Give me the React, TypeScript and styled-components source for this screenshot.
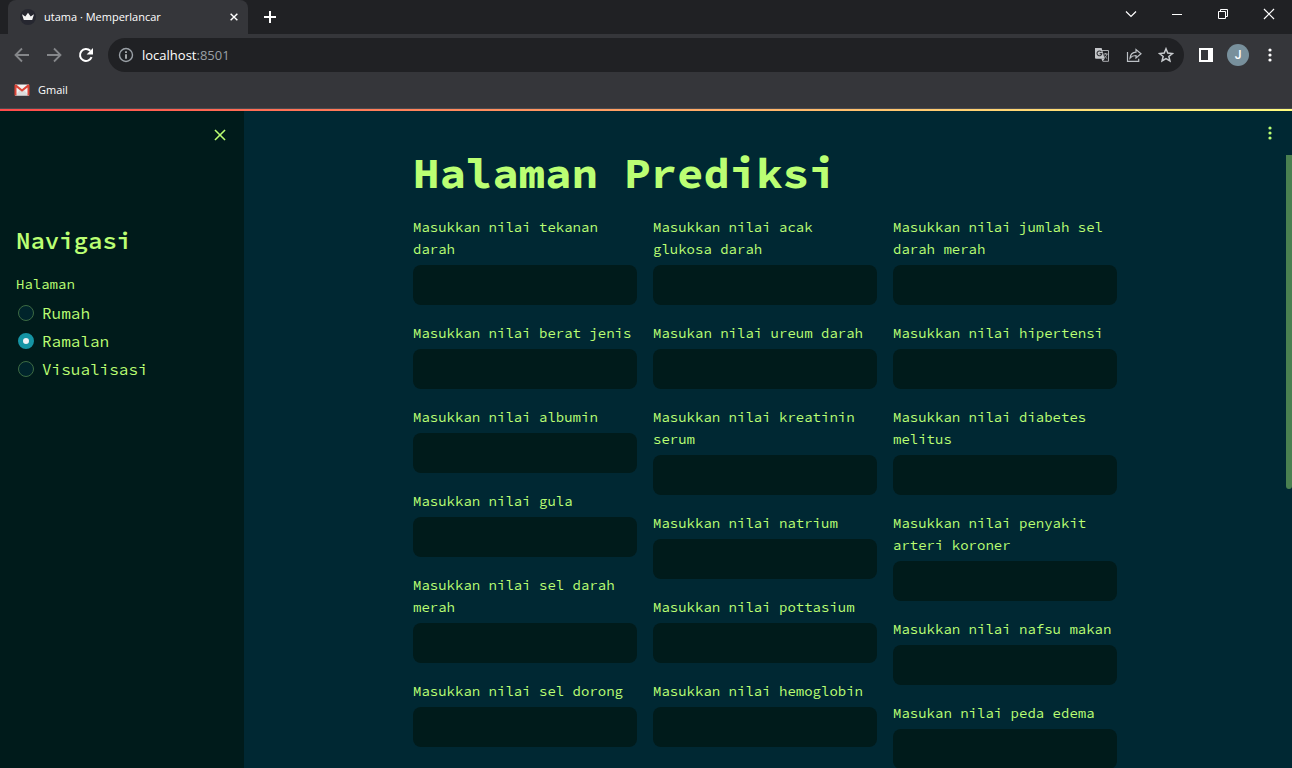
import React, { useState } from 'react';
import styled, { createGlobalStyle } from 'styled-components';

const mono = '"Source Code Pro", "DejaVu Sans Mono", monospace';
const ui = '"Open Sans", "Noto Sans", sans-serif';

const GlobalStyle = createGlobalStyle`
  *, *::before, *::after { box-sizing: border-box; }
  body { margin: 0; background: #002833; }
  h1, h2, p { margin: 0; }
  button, input { font: inherit; color: inherit; }
`;

const Window = styled.div`
  display: flex;
  flex-direction: column;
  height: 100vh;
  overflow: hidden;
  font-family: ${ui};
`;

const TabStrip = styled.div`
  display: flex;
  align-items: stretch;
  height: 34px;
  flex: none;
  padding-left: 8px;
  background: #202124;
  color: #fff;
`;

const Tab = styled.div`
  display: flex;
  align-items: center;
  gap: 8px;
  width: 240px;
  padding: 0 7px 0 12px;
  border-radius: 8px 8px 0 0;
  background: #35363a;
  font-size: 11px;
  line-height: 16px;
`;

const TabTitle = styled.span`
  flex: 1;
  white-space: nowrap;
`;

const IconButton = styled.button<{ $size?: number }>`
  display: flex;
  align-items: center;
  justify-content: center;
  flex: none;
  width: ${({ $size = 32 }) => $size}px;
  height: ${({ $size = 32 }) => $size}px;
  padding: 0;
  border: 0;
  background: none;
  cursor: pointer;
`;

const NewTab = styled(IconButton)`
  align-self: center;
  margin-left: 6px;
`;

const WindowControls = styled.div`
  display: flex;
  margin-left: auto;
`;

const WindowButton = styled.button`
  display: flex;
  align-items: center;
  justify-content: center;
  width: 46px;
  height: 28px;
  padding: 0;
  border: 0;
  background: none;
`;

const Toolbar = styled.div`
  display: flex;
  align-items: center;
  height: 42px;
  flex: none;
  padding: 0 6px;
  background: #35363a;
`;

const AddressBar = styled.div`
  display: flex;
  align-items: center;
  flex: 1;
  height: 34px;
  margin: 0 6px;
  padding: 0 2px 0 10px;
  border-radius: 17px;
  background: #202124;
  font-size: 13px;
  line-height: 20px;
`;

const Address = styled.p`
  flex: 1;
  margin-left: 8px;
  color: #fff;
`;

const Port = styled.span`
  color: #9aa0a6;
`;

const Avatar = styled.button`
  width: 22px;
  height: 22px;
  margin: 0 5px;
  padding: 0;
  border: 0;
  border-radius: 50%;
  background: #78909c;
  color: #fff;
  font-family: Roboto, sans-serif;
  font-size: 12px;
  font-weight: 500;
  line-height: 22px;
`;

const Bookmarks = styled.nav`
  display: flex;
  align-items: center;
  height: 33px;
  flex: none;
  padding: 0 14px 4px;
  border-bottom: 1px solid #4a4b4f;
  background: #35363a;
`;

const Bookmark = styled.a`
  display: flex;
  align-items: center;
  gap: 8px;
  color: #fff;
  font-size: 11px;
  line-height: 16px;
  text-decoration: none;
`;

const Decoration = styled.div`
  height: 2px;
  flex: none;
  background: linear-gradient(90deg, #ff4b4b, #fffd80);
`;

const Page = styled.div`
  display: flex;
  flex: 1;
  min-height: 0;
  color: #bbff73;
  font-family: ${mono};
`;

const Sidebar = styled.aside`
  width: 244px;
  flex: none;
  background: #001b1b;
`;

const SidebarHeader = styled.div`
  display: flex;
  justify-content: flex-end;
  height: 112px;
  padding: 8px;
`;

const SidebarBody = styled.div`
  padding: 0 16px;
`;

const SidebarTitle = styled.h2`
  font-size: 24px;
  font-weight: 600;
  line-height: 36px;
`;

const RadioGroup = styled.fieldset`
  margin: 14px 0 0;
  padding: 0;
  border: 0;
`;

const Legend = styled.legend`
  padding: 0 0 4px;
  font-size: 14px;
  line-height: 22px;
`;

const Option = styled.label`
  display: flex;
  align-items: center;
  gap: 8px;
  height: 28px;
  padding-left: 2px;
  font-size: 16px;
  line-height: 28px;
`;

const Radio = styled.input`
  appearance: none;
  width: 16px;
  height: 16px;
  margin: 0;
  border: 1px solid #3c6b43;
  border-radius: 50%;
  background: #00242b;

  &:checked {
    border: 5px solid #1594a4;
    background: #f0f2f6;
  }
`;

const Main = styled.main`
  position: relative;
  display: flex;
  flex: 1;
  min-width: 0;
  background: #002833;
`;

const AppHeader = styled.header`
  position: absolute;
  top: 0;
  right: 0;
  display: flex;
  align-items: center;
  height: 44px;
  padding-right: 6px;
`;

const Content = styled.div`
  flex: 1;
  min-width: 0;
  padding-top: 36px;
`;

const Block = styled.div`
  max-width: 736px;
  margin: 0 auto;
  padding: 0 16px;
`;

const ScrollTrack = styled.div`
  width: 6px;
  flex: none;
  padding-top: 44px;
`;

const ScrollThumb = styled.div`
  height: 334px;
  border-radius: 0 0 3px 3px;
  background: #4a8050;
`;

const Title = styled.h1`
  font-size: 44px;
  font-weight: 700;
  line-height: 52px;
`;

const Columns = styled.form`
  display: grid;
  grid-template-columns: repeat(3, minmax(0, 1fr));
  gap: 16px;
  margin-top: 17px;
`;

const Column = styled.div`
  display: flex;
  flex-direction: column;
  gap: 17px;
`;

const Field = styled.label`
  display: flex;
  flex-direction: column;
  gap: 5px;
  font-size: 14px;
  line-height: 22px;
`;

const TextInput = styled.input`
  width: 100%;
  height: 40px;
  padding: 0 12px;
  border: 0;
  border-radius: 8px;
  background: #001b1b;
`;

const columns = [
  [
    'Masukkan nilai tekanan darah',
    'Masukkan nilai berat jenis',
    'Masukkan nilai albumin',
    'Masukkan nilai gula',
    'Masukkan nilai sel darah merah',
    'Masukkan nilai sel dorong',
  ],
  [
    'Masukkan nilai acak glukosa darah',
    'Masukan nilai ureum darah',
    'Masukkan nilai kreatinin serum',
    'Masukkan nilai natrium',
    'Masukkan nilai pottasium',
    'Masukkan nilai hemoglobin',
  ],
  [
    'Masukkan nilai jumlah sel darah merah',
    'Masukkan nilai hipertensi',
    'Masukkan nilai diabetes melitus',
    'Masukkan nilai penyakit arteri koroner',
    'Masukkan nilai nafsu makan',
    'Masukan nilai peda edema',
  ],
];

const pages = ['Rumah', 'Ramalan', 'Visualisasi'];

const CrownIcon = () => (
  <svg width="16" height="16" viewBox="0 0 16 16" aria-hidden="true">
    <circle cx="8" cy="8" r="8" fill="#262730" />
    <path d="M2 5.2 5.3 7.4 8 3.8l2.7 3.6L14 5.2 12.2 11H3.8Z" fill="#f4f4f4" />
  </svg>
);

const CloseIcon = ({ size, color = '#fff', width = 1.5 }: { size: number; color?: string; width?: number }) => (
  <svg width={size} height={size} viewBox="0 0 10 10" stroke={color} strokeWidth={width} aria-hidden="true">
    <path d="m.8.8 8.4 8.4M9.2.8.8 9.2" />
  </svg>
);

const PlusIcon = () => (
  <svg width="12" height="12" viewBox="0 0 12 12" stroke="#fff" strokeWidth="2" aria-hidden="true">
    <path d="M6 0v12M0 6h12" />
  </svg>
);

const ArrowIcon = ({ forward }: { forward?: boolean }) => (
  <svg width="16" height="16" viewBox="0 0 16 16" fill="none" stroke="#85878a" strokeWidth="1.8" aria-hidden="true">
    {forward ? <path d="M1 8h13M8 1.5 14.5 8 8 14.5" /> : <path d="M15 8H2M8 1.5 1.5 8 8 14.5" />}
  </svg>
);

const ReloadIcon = () => (
  <svg width="16" height="16" viewBox="0 0 16 16" fill="none" aria-hidden="true">
    <path d="M13.6 10.2A6 6 0 1 1 12.3 3.8" stroke="#fff" strokeWidth="2" />
    <path d="M15 1v6.4H8.6Z" fill="#fff" />
  </svg>
);

const InfoIcon = () => (
  <svg width="16" height="16" viewBox="0 0 16 16" aria-hidden="true">
    <circle cx="8" cy="8" r="6.5" fill="none" stroke="#9aa0a6" strokeWidth="1.4" />
    <path d="M7.2 4.3h1.6v1.6H7.2ZM7.2 7.2h1.6v4.6H7.2Z" fill="#c4c7c9" />
  </svg>
);

const TranslateIcon = () => (
  <svg width="16" height="16" viewBox="0 0 16 16" fill="none" aria-hidden="true">
    <path d="M7 3.5h7.5v10.8H8.8" stroke="#a9abae" />
    <path d="M1 1h6.6l3 10.8H2a1 1 0 0 1-1-1Z" fill="#c4c6c9" />
    <path d="M7.4 5A2.4 2.4 0 1 0 7.8 6.6H5.6" stroke="#35363a" strokeWidth="1.1" />
    <path d="M9.6 7h4M11.6 6v1M13 7c-.6 2-1.7 3.3-3 4.2M10.4 8.6c.7 1.2 1.7 2.2 2.8 3" stroke="#a9abae" />
    <path d="m7.4 11.8 3.2 0-2 2.7Z" fill="#c4c6c9" />
  </svg>
);

const ShareIcon = () => (
  <svg width="16" height="16" viewBox="0 0 16 16" fill="none" stroke="#bdc1c6" strokeWidth="1.2" aria-hidden="true">
    <path d="M1.5 5v9.4h11.2v-2.6" />
    <path d="M4 11c.4-3.6 2.3-5.600 6-5.900V2.500L15 6.800 10 11V8.500c-2.700 0-4.500.7-6 2.500Z" />
  </svg>
);

const StarIcon = () => (
  <svg width="16" height="16" viewBox="0 0 16 16" fill="none" stroke="#c7cacd" strokeWidth="1.5" aria-hidden="true">
    <path d="m8 1.800 1.750 4.300 4.650.4-3.550 3 1.100 4.500L8 11.600 4.050 14l1.100-4.500-3.550-3 4.650-.4Z" />
  </svg>
);

const PanelIcon = () => (
  <svg width="14" height="14" viewBox="0 0 14 14" aria-hidden="true">
    <path d="M0 0h14v14H0ZM2 2v10h7V2Z" fill="#fff" fillRule="evenodd" />
  </svg>
);

const DotsIcon = ({ color = '#fff' }: { color?: string }) => (
  <svg width="4" height="14" viewBox="0 0 4 14" fill={color} aria-hidden="true">
    <circle cx="2" cy="2" r="1.6" />
    <circle cx="2" cy="7" r="1.6" />
    <circle cx="2" cy="12" r="1.6" />
  </svg>
);

const ChevronIcon = () => (
  <svg width="12" height="12" viewBox="0 0 12 12" fill="none" stroke="#fff" strokeWidth="1.2" aria-hidden="true">
    <path d="m1 3.500 5 5 5-5" />
  </svg>
);

const MinimizeIcon = () => (
  <svg width="10" height="10" viewBox="0 0 10 10" aria-hidden="true">
    <path d="M0 5h10v1H0Z" fill="#fff" />
  </svg>
);

const RestoreIcon = () => (
  <svg width="10" height="10" viewBox="0 0 10 10" fill="none" stroke="#fff" aria-hidden="true">
    <path d="M.5 2.500h7v7h-7ZM2.500 2.500v-2h7v7h-2" />
  </svg>
);

const GmailIcon = () => (
  <svg width="16" height="16" viewBox="0 0 16 16" aria-hidden="true">
    <path d="M1 2.500h14v11H1Z" fill="#f1f1f1" />
    <path d="M1 13.500 6 8l2 1.500L10 8l5 5.500Z" fill="#dcdcdc" />
    <path d="M.5 13.500V3.300q0-.8.8-.8h.9L8 7.200l5.800-4.700h.9q.8 0 .8.8v10.200h-2V5.400L8 9.800 2.500 5.400v8.100Z" fill="#db4437" />
  </svg>
);

export default function App() {
  const [page, setPage] = useState('Ramalan');

  return (
    <Window>
      <GlobalStyle />
      <TabStrip>
        <Tab>
          <CrownIcon />
          <TabTitle>utama · Memperlancar</TabTitle>
          <IconButton $size={14} aria-label="Close tab">
            <CloseIcon size={8} width={1.8} />
          </IconButton>
        </Tab>
        <NewTab aria-label="New tab">
          <PlusIcon />
        </NewTab>
        <WindowControls>
          <WindowButton aria-label="Search tabs"><ChevronIcon /></WindowButton>
          <WindowButton aria-label="Minimize"><MinimizeIcon /></WindowButton>
          <WindowButton aria-label="Restore"><RestoreIcon /></WindowButton>
          <WindowButton aria-label="Close window"><CloseIcon size={12} width={1} /></WindowButton>
        </WindowControls>
      </TabStrip>

      <Toolbar>
        <IconButton aria-label="Back"><ArrowIcon /></IconButton>
        <IconButton aria-label="Forward"><ArrowIcon forward /></IconButton>
        <IconButton aria-label="Reload"><ReloadIcon /></IconButton>
        <AddressBar>
          <InfoIcon />
          <Address>localhost<Port>:8501</Port></Address>
          <IconButton aria-label="Translate"><TranslateIcon /></IconButton>
          <IconButton aria-label="Share"><ShareIcon /></IconButton>
          <IconButton aria-label="Bookmark"><StarIcon /></IconButton>
        </AddressBar>
        <IconButton aria-label="Side panel"><PanelIcon /></IconButton>
        <Avatar aria-label="Profile">J</Avatar>
        <IconButton aria-label="Browser menu"><DotsIcon /></IconButton>
      </Toolbar>

      <Bookmarks>
        <Bookmark href="#">
          <GmailIcon />
          Gmail
        </Bookmark>
      </Bookmarks>

      <Decoration />

      <Page>
        <Sidebar>
          <SidebarHeader>
            <IconButton aria-label="Close sidebar">
              <CloseIcon size={12} color="#bbff73" width={1.3} />
            </IconButton>
          </SidebarHeader>
          <SidebarBody>
            <SidebarTitle>Navigasi</SidebarTitle>
            <RadioGroup>
              <Legend>Halaman</Legend>
              {pages.map((name) => (
                <Option key={name}>
                  <Radio type="radio" name="page" checked={page === name} onChange={() => setPage(name)} />
                  {name}
                </Option>
              ))}
            </RadioGroup>
          </SidebarBody>
        </Sidebar>

        <Main>
          <Content>
            <Block>
              <Title>Halaman Prediksi</Title>
              <Columns>
                {columns.map((labels, index) => (
                  <Column key={index}>
                    {labels.map((label) => (
                      <Field key={label}>
                        {label}
                        <TextInput type="text" />
                      </Field>
                    ))}
                  </Column>
                ))}
              </Columns>
            </Block>
          </Content>
          <ScrollTrack>
            <ScrollThumb />
          </ScrollTrack>
          <AppHeader>
            <IconButton aria-label="Main menu"><DotsIcon color="#bbff73" /></IconButton>
          </AppHeader>
        </Main>
      </Page>
    </Window>
  );
}
